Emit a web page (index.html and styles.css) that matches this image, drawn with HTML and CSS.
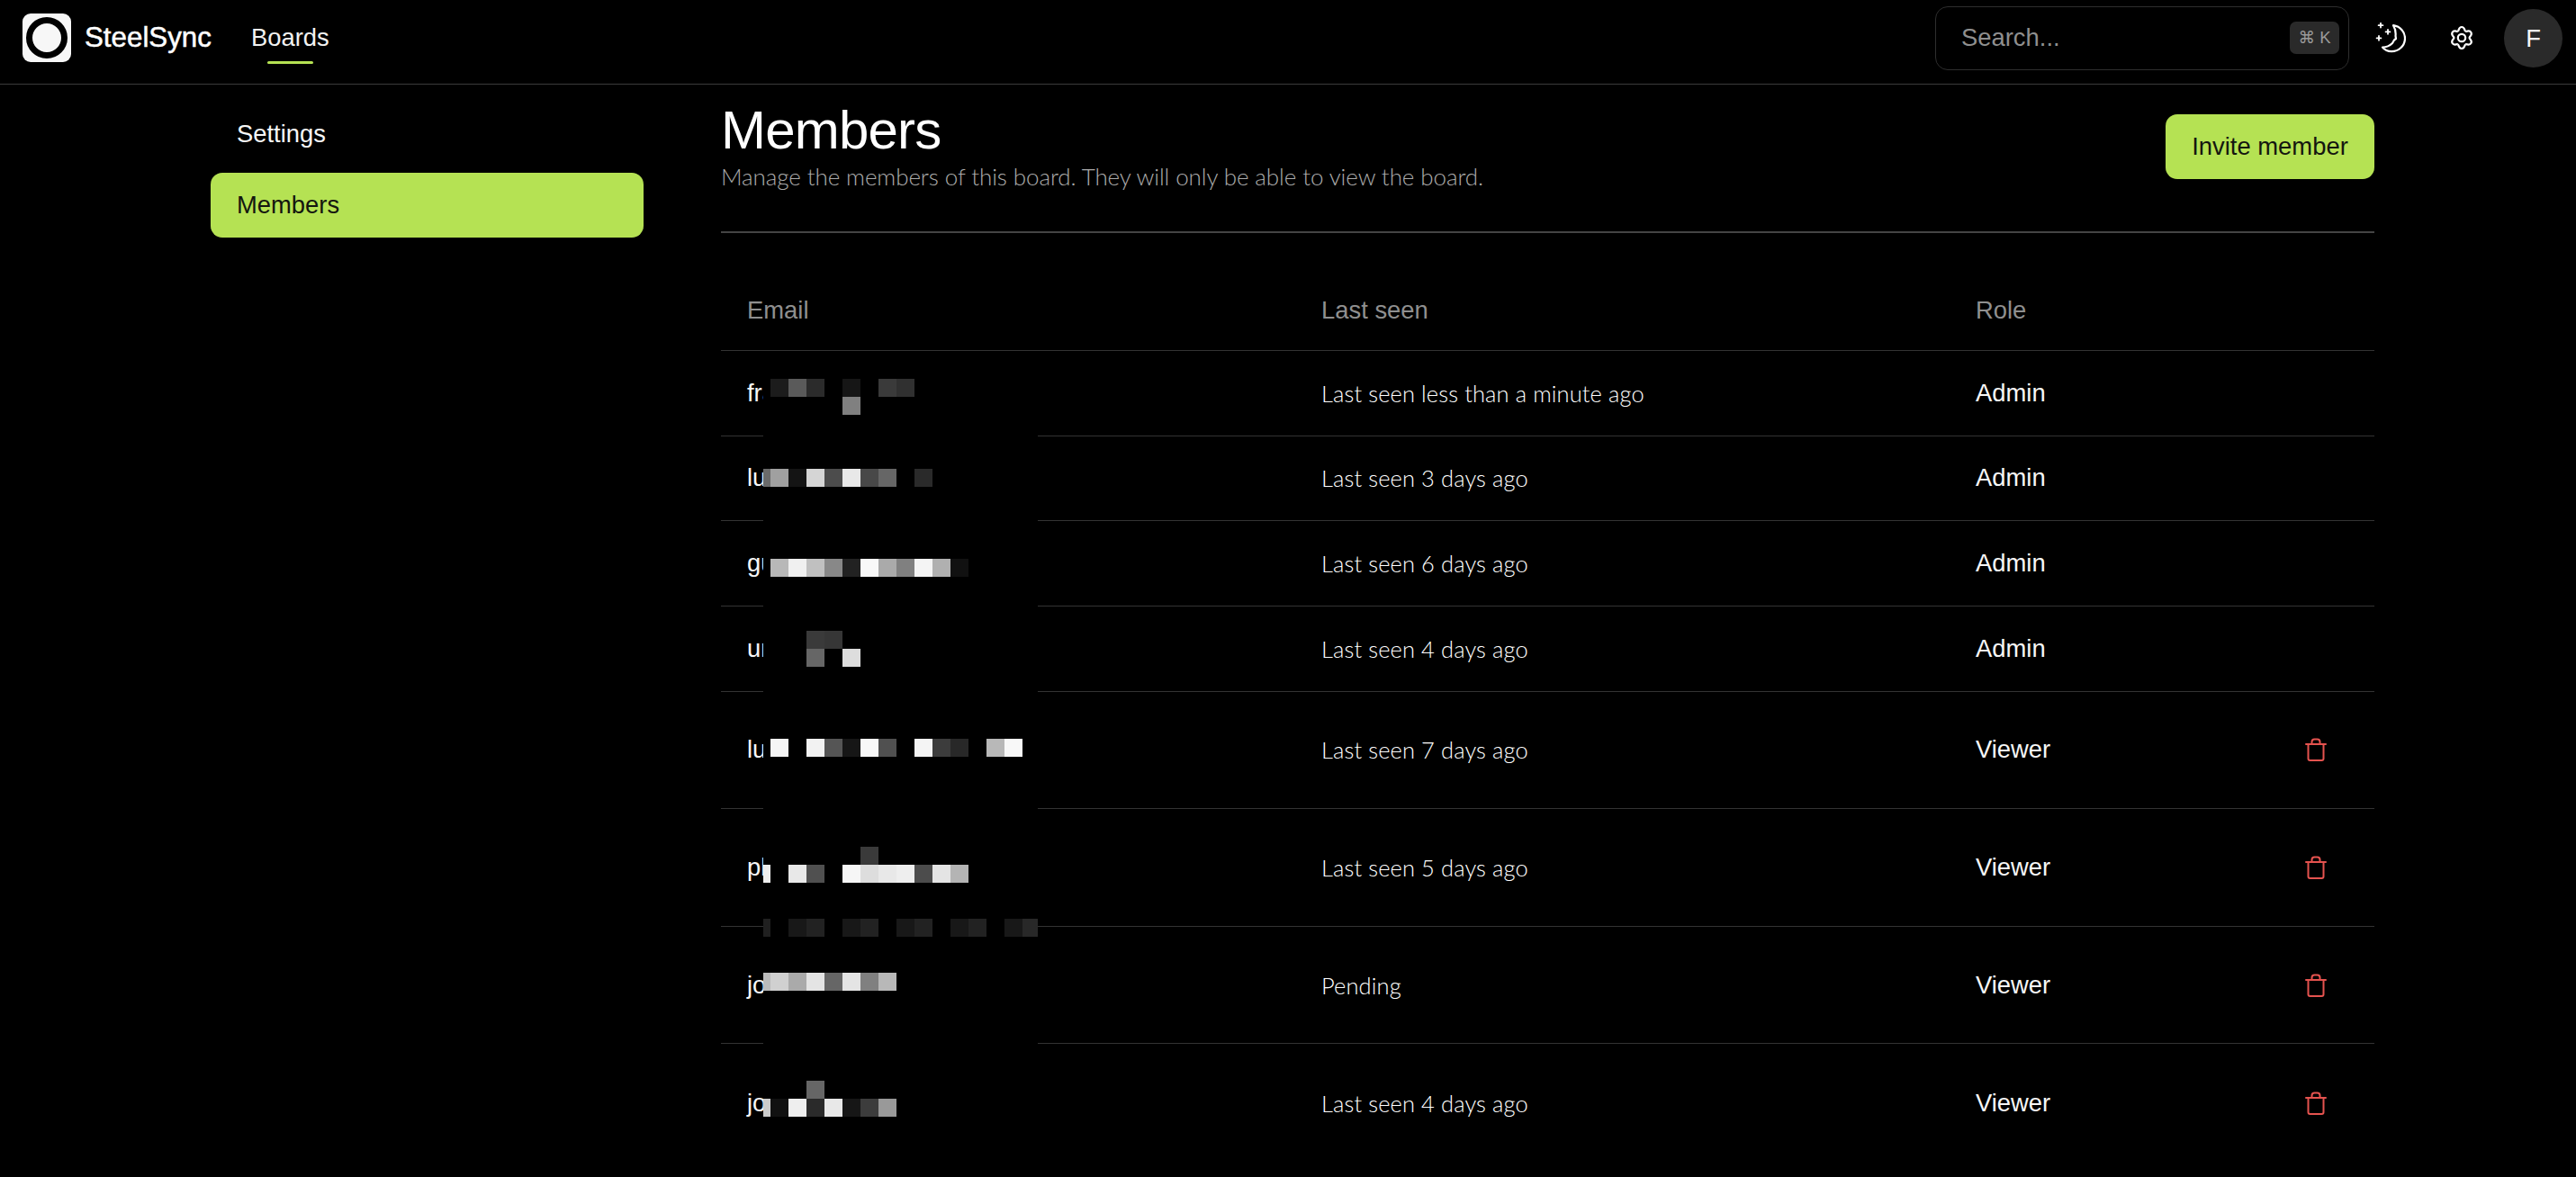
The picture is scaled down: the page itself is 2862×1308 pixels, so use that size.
FILE: index.html
```html
<!DOCTYPE html>
<html lang="en">
<head>
<meta charset="utf-8">
<title>SteelSync – Members</title>
<link rel="stylesheet" href="styles.css">
</head>
<body>
<header class="topbar">
  <div class="brand">
    <svg class="logo" viewBox="0 0 54 54"><rect width="54" height="54" rx="9" fill="#f7f7f7"/><circle cx="27" cy="27" r="19.5" fill="#f7f7f7" stroke="#000" stroke-width="7"/></svg>
    <span class="brand-name">SteelSync</span>
  </div>
  <nav class="topnav"><a class="topnav-link">Boards</a></nav>
  <div class="top-actions">
    <div class="search"><span class="search-ph">Search...</span><kbd class="kbd">⌘ K</kbd></div>
    <svg class="moon" viewBox="0 0 34 34" fill="none" stroke="#fff" stroke-width="2.2" stroke-linecap="round" stroke-linejoin="round">
      <path d="M20 3.2C28 4.5 33 10.500 33 17.500 33 26 26 32.200 18 32.200 14 32.200 10.500 30.500 8 27.500 12 27.500 16 26 19 23 L21 19.500 23 18 22.500 15 C23 10.500 22 6.500 20 3.200Z"/>
      <path d="M6 0.800V5.600M3.600 3.200H8.400M14 8V12.800M11.600 10.400H16.400M4 15V19.800M1.600 17.400H6.400" stroke-width="1.800"/>
    </svg>
    <svg class="gear" viewBox="-14 -14 28 28" fill="none" stroke="#fff" stroke-width="2.200" stroke-linejoin="round">
      <defs><path id="lobe" d="M-4.200 -7.270C-2.800 -8.800 -3.400 -12 0 -12S2.800 -8.800 4.200 -7.270"/></defs>
      <use href="#lobe"/><use href="#lobe" transform="rotate(60)"/><use href="#lobe" transform="rotate(120)"/><use href="#lobe" transform="rotate(180)"/><use href="#lobe" transform="rotate(240)"/><use href="#lobe" transform="rotate(300)"/>
      <circle r="4.200"/>
    </svg>
    <div class="avatar">F</div>
  </div>
</header>

<div class="layout">
  <aside class="sidenav">
    <a class="sidenav-item">Settings</a>
    <a class="sidenav-item is-active">Members</a>
  </aside>
  <main class="content">
    <div class="page-head">
      <div>
        <h1 class="page-title">Members</h1>
        <p class="page-desc">Manage the members of this board. They will only be able to view the board.</p>
      </div>
      <button class="btn-primary">Invite member</button>
    </div>
    <div class="table">
      <div class="row row-head"><div class="cell">Email</div><div class="cell">Last seen</div><div class="cell">Role</div><div class="cell"></div></div>
      <div class="row"><div class="cell">fra</div><div class="cell seen">Last seen less than a minute ago</div><div class="cell">Admin</div><div class="cell"></div></div>
      <div class="row"><div class="cell">lu</div><div class="cell seen">Last seen 3 days ago</div><div class="cell">Admin</div><div class="cell"></div></div>
      <div class="row"><div class="cell">gu</div><div class="cell seen">Last seen 6 days ago</div><div class="cell">Admin</div><div class="cell"></div></div>
      <div class="row"><div class="cell">un</div><div class="cell seen">Last seen 4 days ago</div><div class="cell">Admin</div><div class="cell"></div></div>
      <div class="row row-tall"><div class="cell">lu</div><div class="cell seen">Last seen 7 days ago</div><div class="cell">Viewer</div><div class="cell cell-action"><svg class="trash" viewBox="0 0 24 26"><use href="#trash-icon"/></svg></div></div>
      <div class="row row-tall"><div class="cell">ph</div><div class="cell seen">Last seen 5 days ago</div><div class="cell">Viewer</div><div class="cell cell-action"><svg class="trash" viewBox="0 0 24 26"><use href="#trash-icon"/></svg></div></div>
      <div class="row row-tall"><div class="cell">jo</div><div class="cell seen">Pending</div><div class="cell">Viewer</div><div class="cell cell-action"><svg class="trash" viewBox="0 0 24 26"><use href="#trash-icon"/></svg></div></div>
      <div class="row row-tall row-last"><div class="cell">jo</div><div class="cell seen">Last seen 4 days ago</div><div class="cell">Viewer</div><div class="cell cell-action"><svg class="trash" viewBox="0 0 24 26"><use href="#trash-icon"/></svg></div></div>
    </div>
  </main>
</div>

<svg class="sprite" width="0" height="0"><defs>
  <g id="trash-icon" fill="none" stroke="#e5534f" stroke-width="2" stroke-linecap="round" stroke-linejoin="round">
    <path d="M1 7H23"/><path d="M3.500 7V23A2 2 0 0 0 5.500 25H18.500A2 2 0 0 0 20.500 23V7"/><path d="M7.500 7V4.500A3 3 0 0 1 10.500 1.500H13.500A3 3 0 0 1 16.500 4.500V7"/>
  </g>
</defs></svg>

<svg class="redaction" viewBox="848 401 305 860" aria-hidden="true">
  <rect x="848" y="401" width="305" height="860" fill="#000"/>
  <g>
    <rect x="856" y="421" width="20" height="20" fill="#1c1c1c"/><rect x="876" y="421" width="20" height="20" fill="#5a5a5a"/><rect x="896" y="421" width="20" height="20" fill="#2b2b2b"/><rect x="936" y="421" width="20" height="20" fill="#161616"/><rect x="976" y="421" width="20" height="20" fill="#3a3a3a"/><rect x="996" y="421" width="20" height="20" fill="#303030"/>
    <rect x="936" y="441" width="20" height="20" fill="#808080"/>

    <rect x="836" y="521" width="20" height="20" fill="#6a6a6a"/><rect x="856" y="521" width="20" height="20" fill="#a0a0a0"/><rect x="876" y="521" width="20" height="20" fill="#141414"/><rect x="896" y="521" width="20" height="20" fill="#d5d5d5"/><rect x="916" y="521" width="20" height="20" fill="#4c4c4c"/><rect x="936" y="521" width="20" height="20" fill="#e8e8e8"/><rect x="956" y="521" width="20" height="20" fill="#484848"/><rect x="976" y="521" width="20" height="20" fill="#666666"/><rect x="1016" y="521" width="20" height="20" fill="#2a2a2a"/>

    <rect x="856" y="621" width="20" height="20" fill="#b8b8b8"/><rect x="876" y="621" width="20" height="20" fill="#f0f0f0"/><rect x="896" y="621" width="20" height="20" fill="#c0c0c0"/><rect x="916" y="621" width="20" height="20" fill="#888888"/><rect x="936" y="621" width="20" height="20" fill="#222222"/><rect x="956" y="621" width="20" height="20" fill="#f8f8f8"/><rect x="976" y="621" width="20" height="20" fill="#aaaaaa"/><rect x="996" y="621" width="20" height="20" fill="#808080"/><rect x="1016" y="621" width="20" height="20" fill="#f4f4f4"/><rect x="1036" y="621" width="20" height="20" fill="#b0b0b0"/><rect x="1056" y="621" width="20" height="20" fill="#111111"/>

    <rect x="896" y="701" width="20" height="20" fill="#3a3a3a"/><rect x="916" y="701" width="20" height="20" fill="#363636"/>
    <rect x="896" y="721" width="20" height="20" fill="#666666"/><rect x="936" y="721" width="20" height="20" fill="#dddddd"/>

    <rect x="856" y="821" width="20" height="20" fill="#f5f5f5"/><rect x="896" y="821" width="20" height="20" fill="#f2f2f2"/><rect x="916" y="821" width="20" height="20" fill="#555555"/><rect x="936" y="821" width="20" height="20" fill="#161616"/><rect x="956" y="821" width="20" height="20" fill="#f8f8f8"/><rect x="976" y="821" width="20" height="20" fill="#505050"/><rect x="1016" y="821" width="20" height="20" fill="#f4f4f4"/><rect x="1036" y="821" width="20" height="20" fill="#3c3c3c"/><rect x="1056" y="821" width="20" height="20" fill="#282828"/><rect x="1096" y="821" width="20" height="20" fill="#b8b8b8"/><rect x="1116" y="821" width="20" height="20" fill="#f8f8f8"/>

    <rect x="956" y="941" width="20" height="20" fill="#3a3a3a"/>
    <rect x="836" y="961" width="20" height="20" fill="#eeeeee"/><rect x="876" y="961" width="20" height="20" fill="#e8e8e8"/><rect x="896" y="961" width="20" height="20" fill="#505050"/><rect x="936" y="961" width="20" height="20" fill="#f6f6f6"/><rect x="956" y="961" width="20" height="20" fill="#dddddd"/><rect x="976" y="961" width="20" height="20" fill="#e8e8e8"/><rect x="996" y="961" width="20" height="20" fill="#eeeeee"/><rect x="1016" y="961" width="20" height="20" fill="#4c4c4c"/><rect x="1036" y="961" width="20" height="20" fill="#e4e4e4"/><rect x="1056" y="961" width="20" height="20" fill="#b4b4b4"/>

    <rect x="836" y="1021" width="20" height="20" fill="#202020"/><rect x="876" y="1021" width="20" height="20" fill="#181818"/><rect x="896" y="1021" width="20" height="20" fill="#222222"/><rect x="936" y="1021" width="20" height="20" fill="#181818"/><rect x="956" y="1021" width="20" height="20" fill="#222222"/><rect x="996" y="1021" width="20" height="20" fill="#181818"/><rect x="1016" y="1021" width="20" height="20" fill="#222222"/><rect x="1056" y="1021" width="20" height="20" fill="#181818"/><rect x="1076" y="1021" width="20" height="20" fill="#222222"/><rect x="1116" y="1021" width="20" height="20" fill="#181818"/><rect x="1136" y="1021" width="20" height="20" fill="#282828"/>

    <rect x="836" y="1081" width="20" height="20" fill="#bbbbbb"/><rect x="856" y="1081" width="20" height="20" fill="#d0d0d0"/><rect x="876" y="1081" width="20" height="20" fill="#aaaaaa"/><rect x="896" y="1081" width="20" height="20" fill="#e4e4e4"/><rect x="916" y="1081" width="20" height="20" fill="#666666"/><rect x="936" y="1081" width="20" height="20" fill="#e4e4e4"/><rect x="956" y="1081" width="20" height="20" fill="#808080"/><rect x="976" y="1081" width="20" height="20" fill="#b8b8b8"/>

    <rect x="896" y="1201" width="20" height="20" fill="#666666"/>
    <rect x="836" y="1221" width="20" height="20" fill="#cccccc"/><rect x="856" y="1221" width="20" height="20" fill="#111111"/><rect x="876" y="1221" width="20" height="20" fill="#eeeeee"/><rect x="896" y="1221" width="20" height="20" fill="#2a2a2a"/><rect x="916" y="1221" width="20" height="20" fill="#e8e8e8"/><rect x="936" y="1221" width="20" height="20" fill="#161616"/><rect x="956" y="1221" width="20" height="20" fill="#3c3c3c"/><rect x="976" y="1221" width="20" height="20" fill="#999999"/>
  </g>
</svg>
</body>
</html>
```
FILE: styles.css
```css
* { box-sizing: border-box; }
html, body { margin: 0; height: 100%; }
body {
  position: relative;
  overflow: hidden;
  background: #000;
  color: #f7f7f7;
  font-family: "Liberation Sans", Arial, sans-serif;
  font-size: 27.4px;
}

/* top bar */
.topbar {
  display: flex;
  align-items: center;
  height: 94px;
  padding: 0 15px 9px 25px;
  border-bottom: 1px solid #3a3a3a;
}
.brand { display: flex; align-items: center; gap: 15px; }
.logo { width: 54px; height: 54px; display: block; }
.brand-name {
  font-size: 31.300px;
  color: #fff;
  -webkit-text-stroke: 0.5px #fff;
}
.topnav { margin-left: 44px; }
.topnav-link {
  position: relative;
  display: block;
  color: #f2f2f2;
  line-height: 58px;
}
.topnav-link::after {
  content: "";
  position: absolute;
  left: 18px;
  right: 18px;
  bottom: 0;
  height: 3px;
  border-radius: 2px;
  background: #b5e253;
}
.top-actions { margin-left: auto; display: flex; align-items: center; }
.search {
  display: flex;
  align-items: center;
  justify-content: space-between;
  width: 460px;
  height: 71px;
  padding: 0 10px 0 28px;
  border: 1px solid #2e2e2e;
  border-radius: 14px;
}
.search-ph { color: #8f8f8f; }
.kbd {
  width: 55px;
  height: 36px;
  border-radius: 7px;
  background: #2a2a2a;
  color: #9a9a9a;
  font-family: "Liberation Sans", "DejaVu Sans", sans-serif;
  font-size: 18.500px;
  line-height: 36px;
  text-align: center;
}
.moon { width: 34px; height: 34px; margin-left: 29px; display: block; }
.gear { width: 28px; height: 28px; margin-left: 48px; display: block; }
.avatar {
  width: 65px;
  height: 65px;
  margin-left: 33px;
  border-radius: 50%;
  background: #2a2a2a;
  color: #f7f7f7;
  line-height: 65px;
  text-align: center;
}

/* page layout */
.layout {
  display: flex;
  gap: 86px;
  padding: 15px 224px 0 234px;
}
.sidenav {
  flex: 0 0 481px;
  display: flex;
  flex-direction: column;
  gap: 7px;
  padding-top: 4px;
}
.sidenav-item {
  height: 72px;
  padding-left: 29px;
  border-radius: 13px;
  line-height: 72px;
  color: #f7f7f7;
}
.sidenav-item.is-active { background: #b5e253; color: #14160f; }

.content { flex: 1; min-width: 0; }
.page-head {
  display: flex;
  align-items: center;
  justify-content: space-between;
  padding-bottom: 45px;
  border-bottom: 2px solid #444;
}
.page-title {
  margin: 0;
  font-size: 60px;
  font-weight: 400;
  letter-spacing: -0.8px;
  line-height: 72px;
  color: #fff;
}
.page-desc {
  margin: 0;
  font-family: "Lato", sans-serif;
  font-weight: 300;
  font-size: 26px;
  line-height: 31px;
  color: #ababab;
  letter-spacing: -0.1px;
}
.btn-primary {
  width: 232px;
  height: 72px;
  border: 0;
  border-radius: 13px;
  background: #b5e253;
  color: #14160f;
  font: inherit;
  margin-top: 5px;
}

/* table */
.table { margin-top: 42px; }
.row {
  display: grid;
  grid-template-columns: 638px 727px 1fr 130px;
  align-items: center;
  height: 94.670px;
  border-bottom: 1px solid #333;
}
.row-head { height: 89px; color: #8f8f8f; }
.row-tall { height: 130.600px; }
.row-last { border-bottom: 0; }
.cell { padding-left: 29px; }
.seen {
  font-family: "Lato", sans-serif;
  font-weight: 300;
  font-size: 25.500px;
  color: #fff;
  letter-spacing: 0.1px;
}
.cell-action { padding-left: 0; display: flex; justify-content: center; }
.trash { width: 24px; height: 26px; display: block; }
.sprite { position: absolute; }

/* blurred-out address block, lies over the email column */
.redaction {
  position: absolute;
  left: 848px;
  top: 401px;
  width: 305px;
  height: 860px;
}
```
